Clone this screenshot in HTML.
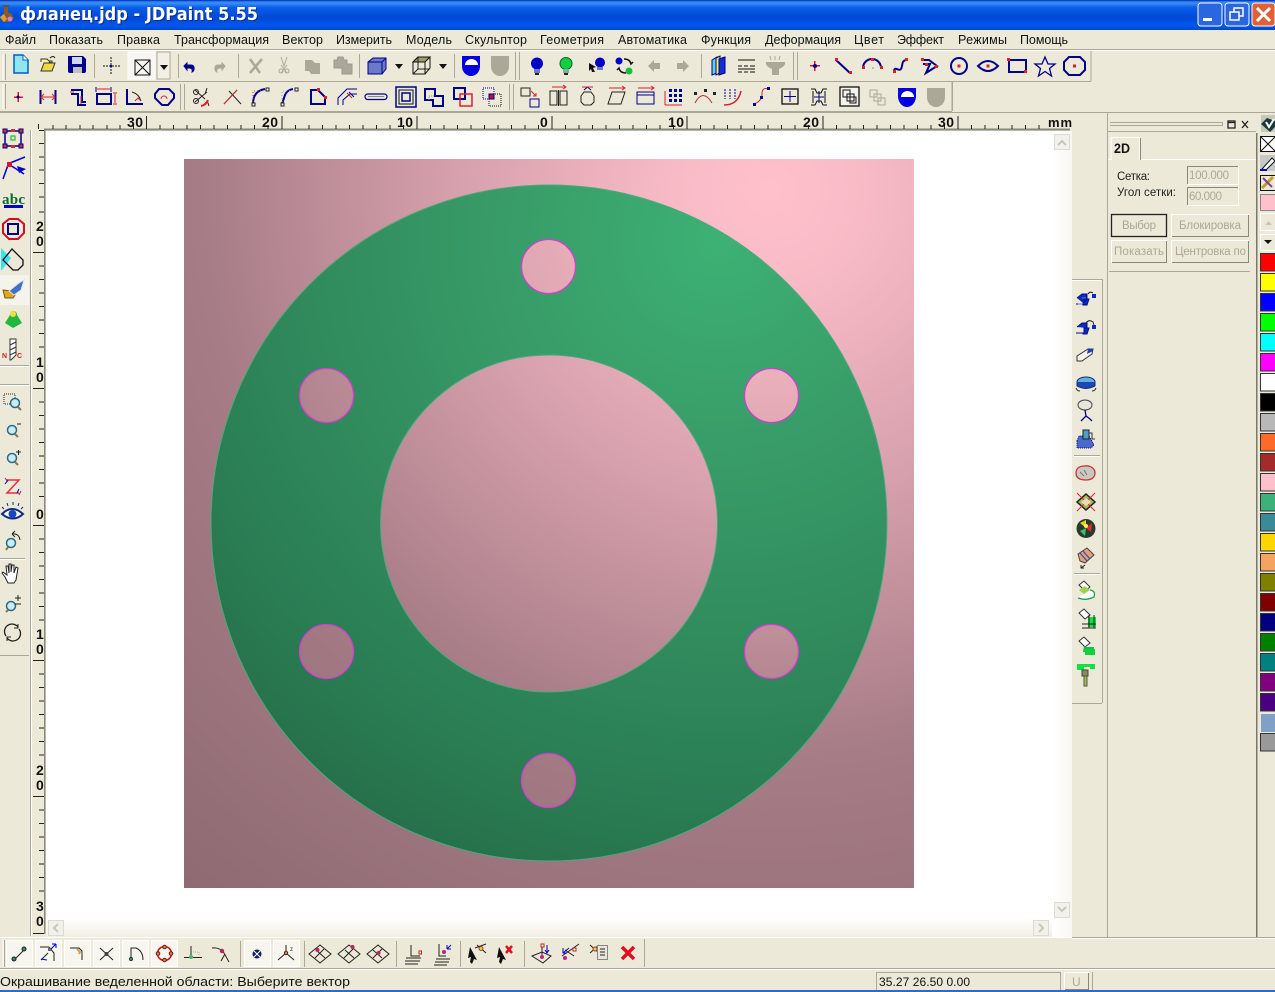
<!DOCTYPE html>
<html><head><meta charset="utf-8"><style>
html,body{margin:0;padding:0;background:#ece9d8;overflow:hidden}
svg{display:block;position:absolute;left:0;top:0}
text{font-family:"Liberation Sans","DejaVu Sans",sans-serif}
.m{font-size:12.5px;fill:#111}
.r{font-family:"Liberation Sans",sans-serif;font-weight:bold;font-size:14px;fill:#111}
.d{font-size:11.5px;fill:#aca899}
.l{font-size:11.5px;fill:#222}
.b{fill:none;stroke:#00008c;stroke-width:2}
.t{fill:none;stroke:#00008c;stroke-width:1}
.k{fill:none;stroke:#222;stroke-width:1}
.s{stroke:#aca899;stroke-width:1;fill:none}
.g{fill:#aca899}
.rd{fill:#e01030}
</style></head><body>
<svg width="1275" height="992" viewBox="0 0 1275 992" xmlns="http://www.w3.org/2000/svg">
<defs>
<linearGradient id="tb" x1="0" y1="0" x2="0" y2="1"><stop offset="0" stop-color="#0a5ae0"/><stop offset=".1" stop-color="#3a90f8"/><stop offset=".25" stop-color="#0a5de8"/><stop offset=".6" stop-color="#0048d8"/><stop offset=".85" stop-color="#0058ee"/><stop offset="1" stop-color="#0048c8"/></linearGradient>
<radialGradient id="pk" gradientUnits="userSpaceOnUse" cx="770" cy="190" r="950"><stop offset="0" stop-color="#ffc0cb"/><stop offset=".1" stop-color="#f8bbc6"/><stop offset=".33" stop-color="#d6a0ac"/><stop offset=".6" stop-color="#a67c86"/><stop offset="1" stop-color="#8c6870"/></radialGradient>
<radialGradient id="gn" gradientUnits="userSpaceOnUse" cx="720" cy="240" r="720"><stop offset="0" stop-color="#3db174"/><stop offset=".3" stop-color="#389c68"/><stop offset=".75" stop-color="#2b7f55"/><stop offset="1" stop-color="#246b47"/></radialGradient>
<linearGradient id="fade" x1="0" y1="0" x2="0" y2="1"><stop offset="0" stop-color="#fff"/><stop offset="1" stop-color="#f1efe4"/></linearGradient>
<linearGradient id="fadeh" x1="0" y1="0" x2="1" y2="0"><stop offset="0" stop-color="#fff"/><stop offset="1" stop-color="#f8f7f1"/></linearGradient>
</defs>

<!-- base -->
<rect width="1275" height="992" fill="#ece9d8"/>
<!-- title bar -->
<rect width="1275" height="30" fill="url(#tb)"/>
<rect y="0" width="1275" height="1" fill="#0840c0"/>
<text x="21" y="21" font-size="18" font-weight="bold" fill="#0a2a80" textLength="238" lengthAdjust="spacingAndGlyphs" style="font-family:'DejaVu Sans',sans-serif">фланец.jdp - JDPaint 5.55</text>
<text x="20" y="20" font-size="18" font-weight="bold" fill="#fff" textLength="238" lengthAdjust="spacingAndGlyphs" style="font-family:'DejaVu Sans',sans-serif">фланец.jdp - JDPaint 5.55</text>
<g><path d="M4 7h4v6h3l3 5-4 4H3l-3-4 4-5z" fill="#8a5a20"/><rect x="3" y="5" width="6" height="2" fill="#555"/><circle cx="10" cy="19" r="2.5" fill="#d080d0"/><path d="M0 17l4-3 3 5-3 3z" fill="#d8a030"/></g>
<!-- window buttons -->
<g stroke="#fff" stroke-width="1">
<rect x="1198" y="3" width="24" height="23" rx="3" fill="#2a66e0"/>
<rect x="1225" y="3" width="24" height="23" rx="3" fill="#2a66e0"/>
<rect x="1252" y="3" width="23" height="23" rx="3" fill="#e0603a"/></g>
<rect x="1203" y="18" width="9" height="3" fill="#fff"/>
<g fill="none" stroke="#fff" stroke-width="1.5"><rect x="1234" y="8" width="9" height="8"/><rect x="1230" y="12" width="9" height="8" fill="#2a66e0"/></g>
<path d="M1257 8l13 13M1270 8l-13 13" stroke="#fff" stroke-width="3"/>

<!-- menu -->
<rect y="49" width="1275" height="1" fill="#aca899"/><rect y="50" width="1275" height="1" fill="#fff"/>
<g class="m">
<text x="5" y="44" textLength="31">Файл</text><text x="49" y="44" textLength="54">Показать</text><text x="117" y="44" textLength="43">Правка</text><text x="174" y="44" textLength="95">Трансформация</text><text x="282" y="44" textLength="41">Вектор</text><text x="336" y="44" textLength="56">Измерить</text><text x="406" y="44" textLength="46">Модель</text><text x="465" y="44" textLength="62">Скульптор</text><text x="540" y="44" textLength="64">Геометрия</text><text x="618" y="44" textLength="69">Автоматика</text><text x="701" y="44" textLength="50">Функция</text><text x="765" y="44" textLength="76">Деформация</text><text x="854" y="44" textLength="30">Цвет</text><text x="897" y="44" textLength="47">Эффект</text><text x="958" y="44" textLength="49">Режимы</text><text x="1020" y="44" textLength="48">Помощь</text>
</g>

<!-- toolbar frames -->
<path d="M0 81.500H1091M1091 51V81M0 111.500H952M952 82V111M0 112.500H1275" stroke="#aca899" fill="none"/>
<g class="s"><path d="M94.500 54V78M178.500 54V78M238.500 54V78M359.500 54V78M454.500 54V78M701.500 54V78"/></g>
<g stroke="#fff" fill="none"><path d="M3 54v26M3 84v25"/></g>
<g stroke="#aca899" fill="none"><path d="M5.500 54v26M5.500 84v25M519.500 52v28M515.500 52v28M797.500 52v28M793.500 52v28M184.500 84v26M180.500 84v26M513.500 84v26M509.500 84v26"/></g>
<!-- TB1 -->
<rect x="128" y="52" width="27" height="27" fill="#f7f6f0" stroke="#fff"/><rect x="157" y="52" width="13" height="27" fill="#f2f0e6" stroke="#aca899"/>
<path d="M14 55h9l5 5v13H14z" fill="#8fe6ee" stroke="#0060c0" stroke-width="1.500"/><path d="M23 55v5h5" fill="#fff" stroke="#0060c0"/>
<path d="M41 62v-3h6l2 2h3v2l-3-1" fill="#fff08a" stroke="#333"/><path d="M41 71l3-8h11l-3 8z" fill="#f0d840" stroke="#333"/><path d="M50 58c2-2 4-2 5 0" stroke="#222" fill="none"/>
<path d="M68 56h15l3 3v12q0 2-2 2H70q-2 0-2-2z" fill="#00008c"/><rect x="72" y="57" width="10" height="7" fill="#d0d8f0"/><rect x="73" y="67" width="9" height="6" fill="#c0c0c0"/>
<path d="M103 66h17M111 57v18" stroke="#111" stroke-dasharray="2 1" fill="none"/><rect x="110" y="65" width="2" height="2" fill="#0000c0"/>
<rect x="135" y="60" width="15" height="15" fill="none" stroke="#111" /><path d="M135 60l15 15M150 60l-15 15" stroke="#111"/>
<path d="M160 65h8l-4 5z" fill="#111"/>
<path d="M184 66l3-3v2h4c4 0 4 6 1 7 1-3-1-4-3-4h-2v2z" fill="#00008c" stroke="#00008c"/>
<path d="M225 66l-3-3v2h-4c-4 0-4 6-1 7-1-3 1-4 3-4h2v2z" class="g" stroke="#aca899"/>
<path d="M250 59l10 14M262 59l-12 14" stroke="#aca899" stroke-width="2.500"/>
<g stroke="#aca899" fill="none"><path d="M281 57l3 9 3-9M281 73l6-8M287 73l-6-8"/><circle cx="281" cy="71" r="2"/><circle cx="287" cy="71" r="2"/></g>
<path d="M305 60h7l3 3h5v11h-9l-2-3h-4z" class="g"/>
<path d="M334 60h3l1-3h5l1 3h3v4h5v10h-10v-6h-8z" class="g" stroke="#999"/>
<path d="M368 62l5-4h13v11l-4 5h-14z" fill="#6a7ac8" stroke="#00008c"/><path d="M368 62h14v12M382 62l4-4" stroke="#00008c" fill="none"/>
<path d="M395 64h8l-4 5z" fill="#111"/>
<path d="M413 62l5-5h12v11l-5 6h-12z" fill="none" stroke="#111"/><path d="M418 57h12l-5 5h-12z" fill="#a0a060" stroke="#111"/><path d="M425 62v12M413 62" stroke="#111"/><path d="M418 57v12h12M418 69l-5 5" stroke="#222" fill="none"/>
<path d="M439 64h8l-4 5z" fill="#111"/>
<g><path d="M462 56h18v10c0 6-4 10-9 10s-9-4-9-10z" fill="#0000e0"/><path d="M465 65a6.500 6 0 0 1 13 0z" fill="#fff"/></g>
<path d="M491 56h18v10c0 6-4 10-9 10s-9-4-9-10z" class="g"/>
<circle cx="537" cy="63.500" r="6" fill="#0000c8"/><rect x="534" y="69" width="6" height="4" fill="#6a7ac8"/><rect x="535" y="73" width="4" height="2" fill="#222"/>
<circle cx="566" cy="63.500" r="6" fill="#10d040" stroke="#063"/><rect x="563" y="69" width="6" height="4" fill="#88b090"/><rect x="564" y="73" width="4" height="2" fill="#222"/>
<circle cx="600" cy="62.500" r="5" fill="#0000c8"/><rect x="597" y="67" width="6" height="3" fill="#6a7ac8"/><path d="M589 63l7 4-3 1 2 4h-3l-1-3-2 2z" fill="#111"/>
<circle cx="619" cy="61" r="3.500" fill="#0000c8"/><circle cx="629" cy="71" r="3.500" fill="#10c040"/><path d="M624 59q6 0 7 5l2-2M626 73q-6 0-7-5l-2 2" stroke="#111" stroke-width="1.500" fill="none"/>
<path d="M648 66l6-6v3h6v6h-6v3z" class="g"/><path d="M689 66l-6-6v3h-6v6h6v3z" class="g"/>
<path d="M712 60l5-3v16l-5 2z" fill="#60d0e0" stroke="#00008c"/><path d="M716 58l4-2v17l-4 2z" fill="#f0f060" stroke="#00008c"/><path d="M719 59l6-2v16l-6 2z" fill="#1030d0" stroke="#00008c"/>
<g stroke="#111"><path d="M738 60h17M738 66h4M744 66h4M750 66h5M738 69h17M738 72h4M744 72h4M750 72h5" fill="none"/></g>
<path d="M766 62h19q1 4-6 7v6h-7v-6q-7-3-6-7z" class="g"/><path d="M771 60l-1-4M775 60v-4M779 60l1-4" stroke="#aca899" fill="none"/>
<g class="rd"><rect x="814" y="61" width="1.500" height="10"/><rect x="810" y="65" width="10" height="1.500"/></g><circle cx="815" cy="66" r="2" fill="#0000a0"/>
<path d="M836 60l14 13" stroke="#00008c" stroke-width="2"/><rect x="835" y="58" width="3" height="3" fill="#e02020"/><rect x="849" y="71" width="3" height="3" fill="#e02020"/>
<path d="M863 68a9 9 0 0 1 18 0" class="b"/><rect x="862" y="66" width="3" height="3" fill="#e02020"/><rect x="871" y="58" width="3" height="3" fill="#e02020"/><rect x="880" y="66" width="3" height="3" fill="#e02020"/><rect x="872" y="67" width="2" height="2" fill="#bbb"/>
<path d="M894 72c0-7 5 0 7-3s0-8 5-9" class="b"/><rect x="893" y="70" width="3" height="3" fill="#e02020"/><rect x="905" y="58" width="3" height="3" fill="#e02020"/>
<path d="M923 60h6l8 6-11 7 4-9h-7" class="b"/><rect x="921" y="58" width="3" height="3" fill="#e02020"/><rect x="935" y="65" width="3" height="3" fill="#e02020"/><rect x="925" y="63" width="3" height="3" fill="#e02020"/>
<circle cx="959" cy="66" r="8" class="b"/><rect x="957.500" y="64.500" width="3" height="3" fill="#e02020"/>
<path d="M978 66q10-10 20 0q-10 10-20 0z" class="b"/><rect x="986.500" y="64.500" width="3" height="3" fill="#e02020"/>
<rect x="1009" y="60" width="17" height="12" class="b"/><rect x="1007" y="58" width="3" height="3" fill="#e02020"/><rect x="1024" y="70" width="3" height="3" fill="#e02020"/>
<path d="M1045 57l3 7h7l-5.500 4.500 2 7.500-6.500-4.500-6.500 4.500 2-7.500-5.500-4.500h7z" fill="none" stroke="#00008c" stroke-width="1.300"/>
<path d="M1069 57h11l5 5v8l-5 5h-11l-5-5v-8z" class="b"/><rect x="1073" y="64.500" width="3" height="3" fill="#e02020"/>
<!-- TB2 -->
<g class="rd"><rect x="17.500" y="92" width="1.500" height="10"/><rect x="14" y="96.500" width="9" height="1.500"/></g><circle cx="18" cy="97" r="1.500" fill="#0000a0"/>
<path d="M40.500 90v14M55.500 90v14" stroke="#00008c" stroke-width="2"/><path d="M42 97h12M44 94l-3 3 3 3M52 94l3 3-3 3" stroke="#e02030" fill="none"/>
<path d="M71 90h11v12h4M71 94h7v11h8" stroke="#00008c" stroke-width="2" fill="none"/><path d="M74 92h-4M81 96v8" stroke="#e02030" fill="none"/>
<rect x="97" y="94" width="14" height="10" fill="none" stroke="#00008c" stroke-width="2"/><path d="M97 89h13M113 93h4M113 104h4M115 94v9" stroke="#d02030" fill="none"/><path d="M96 87v5M111 87v5" stroke="#00008c"/>
<path d="M127 89v15h16" stroke="#00008c" stroke-width="2" fill="none"/><path d="M132 92q7 2 9 9" stroke="#222" fill="none"/><path d="M135 101l3-3 3 3" stroke="#d02030" fill="none"/>
<path d="M159 89h10l5 5v4l-6 7h-6l-7-7v-4z" fill="none" stroke="#00008c" stroke-width="2"/><path d="M161 99a3 3 0 0 1 6 0" stroke="#e02030" fill="none"/>
<!-- scissors etc -->
<path d="M195 90l10 9M195 102l12-10M207 88l-2 6M207 100l2 6" stroke="#222" fill="none"/><circle cx="196" cy="92" r="2.500" fill="none" stroke="#222"/><circle cx="196" cy="101" r="2.500" fill="none" stroke="#222"/><path d="M201 106q5-1 7-6" stroke="#e02030" stroke-width="2" fill="none"/>
<path d="M224 104l13-14M229 91l12 13" stroke="#222" fill="none"/><path d="M224 104l13-14" stroke="#c03030" fill="none"/>
<path d="M253 104q0-13 12-15" stroke="#00008c" stroke-width="2" fill="none"/><rect x="252" y="103" width="3" height="3" fill="#fff" stroke="#222"/><rect x="266" y="88" width="3" height="3" fill="#fff" stroke="#222"/><path d="M253 102V91h10" stroke="#c03030" stroke-dasharray="1 2" fill="none"/>
<path d="M282 104l3-9q2-5 8-6" stroke="#00008c" stroke-width="2" fill="none"/><rect x="281" y="103" width="3" height="3" fill="#fff" stroke="#222"/><rect x="295" y="88" width="3" height="3" fill="#fff" stroke="#222"/><path d="M282 102V91h8" stroke="#999" stroke-dasharray="1 2" fill="none"/>
<path d="M311 90h7l7 7v7h-14z" class="b"/><rect x="317" y="88" width="3" height="3" fill="#e02020"/><rect x="324" y="96" width="3" height="3" fill="#e02020"/>
<path d="M338 105v-7l9-9h10M343 105v-5l7-6h7M349 92l5 5" stroke="#00008c" fill="none"/><path d="M347 93l5 5" stroke="#d02030" fill="none"/>
<rect x="365" y="94" width="22" height="5.500" rx="2.700" fill="none" stroke="#00008c" stroke-width="1.200"/><path d="M368 96.500h16" stroke="#888"/>
<rect x="396" y="87" width="20" height="20" fill="none" stroke="#00008c" stroke-width="1.500"/><rect x="399" y="90" width="14" height="14" fill="none" stroke="#111"/><rect x="402" y="93" width="8" height="8" fill="none" stroke="#00008c" stroke-width="1.500"/>
<path d="M425 89h10v7h8v10h-10v-6h-8z" class="b"/><path d="M434 96h-5v5" stroke="#888" stroke-dasharray="1 1" fill="none"/>
<rect x="454" y="88" width="11" height="11" class="b"/><rect x="460" y="94" width="12" height="12" fill="none" stroke="#e02030" stroke-width="1.500"/>
<rect x="483" y="88" width="11" height="11" fill="none" stroke="#00008c" stroke-dasharray="1 1"/><rect x="489" y="94" width="12" height="12" fill="none" stroke="#111" stroke-dasharray="1 1"/><rect x="489" y="94" width="5" height="5" fill="#c01040" stroke="#00008c"/>
<!-- transforms -->
<rect x="521" y="88" width="9" height="8" fill="none" stroke="#222"/><rect x="530" y="99" width="9" height="8" fill="none" stroke="#00008c"/><path d="M531 91l5 5M536 93v3h-3" stroke="#e02030" fill="none"/>
<rect x="550" y="91" width="7" height="14" fill="none" stroke="#222"/><rect x="560" y="91" width="7" height="14" fill="none" stroke="#222"/><path d="M558.500 90v16" stroke="#222"/><path d="M552 87h14M563 85l3 2-3 2" stroke="#e02030" fill="none"/>
<path d="M584 92h7l3 4v6l-3 3h-7l-3-3v-6z" fill="none" stroke="#222"/><path d="M584 90l3.500-3 3.500 3" class="t"/><path d="M582 87h11" stroke="#e02030"/>
<path d="M612 92h13l-4 12h-13z" class="k"/><path d="M609 88h16M622 86l3 2-3 2" stroke="#e02030" fill="none"/>
<rect x="637" y="92" width="17" height="12" fill="none" stroke="#00008c"/><path d="M637 95h17" stroke="#00008c"/><path d="M638 88h16M651 86l3 2-3 2" stroke="#e02030" fill="none"/>
<g fill="#00008c" stroke="none"><path d="M669 89h3v3h-3zM674 89h3v3h-3zM679 89h3v3h-3zM669 94h3v3h-3zM674 94h3v3h-3zM679 94h3v3h-3zM669 99h3v3h-3zM674 99h3v3h-3zM679 99h3v3h-3z"/></g><path d="M665 91v14M665 105h17" stroke="#e02030" fill="none"/>
<path d="M695 103q8-15 17 0" stroke="#c03030" fill="none"/><rect x="694" y="92" width="3" height="3" fill="#223"/><rect x="704" y="89" width="3" height="3" fill="#223"/><rect x="713" y="92" width="3" height="3" fill="#223"/>
<path d="M725 89v10M730 89v10M735 89v10" stroke="#00008c" stroke-dasharray="2 1" fill="none"/><path d="M724 105q14 0 17-14" stroke="#d02030" stroke-width="1.500" fill="none"/>
<path d="M754 104q8-3 8-10t6-5" stroke="#c03030" fill="none"/><rect x="753" y="103" width="3" height="3" fill="#0000b0"/><rect x="760" y="96" width="3" height="3" fill="#0000b0"/><rect x="767" y="87" width="3" height="3" fill="#0000b0"/>
<rect x="782" y="89" width="16" height="15" fill="none" stroke="#111" stroke-width="1.300"/><path d="M790 91v11M784 96.500h12" stroke="#00008c" fill="none"/>
<path d="M811 89h4l2 4h4l2-4h4M811 105h4l2-4h4l2 4h4M813 91v12M825 91v12" stroke="#111" fill="none"/><path d="M819 91v12M814 97h10" stroke="#00008c" fill="none"/>
<rect x="840" y="87" width="19" height="19" fill="#f5f4ec" stroke="#111" stroke-width="1.300"/><rect x="843" y="90" width="7" height="7" fill="none" stroke="#111"/><rect x="847" y="94" width="7" height="7" fill="none" stroke="#111"/><rect x="850" y="97" width="6" height="6" fill="none" stroke="#111"/>
<g fill="none" stroke="#aca899"><rect x="870" y="90" width="7" height="7"/><rect x="874" y="94" width="7" height="7"/><rect x="878" y="98" width="7" height="7"/></g>
<g><path d="M898 88h18v8c0 6-4 11-9 11s-9-5-9-11z" fill="#0000e0"/><path d="M901 97a6.500 6 0 0 1 13 0z" fill="#fff"/></g>
<path d="M927 88h18v9c0 6-4 10-9 10s-9-4-9-10z" class="g"/>
<path d="M952.500 82v29" stroke="#aca899"/>

<!-- rulers -->
<path d="M44 129.500H1070" stroke="#8a8878" stroke-width="2"/>
<path d="M38.500 124V129M53 125V129M66 125V129M80 125V129M93 125V129M107 125V129M120 125V129" stroke="#222"/>
<g stroke="#222"><path d="M133.500 125v4M146.500 116v13M160 125v4M173.500 125v4M187 125v4M200.500 125v4M214 125v4M227.500 125v4M241 125v4M254.500 125v4M282 116v13M268 125v4M295.500 125v4M309 125v4M322.500 125v4M336 125v4M349.500 125v4M363 125v4M376.500 125v4M390 125v4M403.500 125v4M417 116v13M430.500 125v4M444 125v4M457.500 125v4M471 125v4M484.500 125v4M498 125v4M511.500 125v4M525 125v4M538.500 125v4M552 116v13M565.500 125v4M579 125v4M592.500 125v4M606 125v4M619.500 125v4M633 125v4M646.500 125v4M660 125v4M673.500 125v4M687 116v13M700.500 125v4M714 125v4M727.500 125v4M741 125v4M754.500 125v4M768 125v4M781.500 125v4M795 125v4M808.500 125v4M823 116v13M836.500 125v4M850 125v4M863.500 125v4M877 125v4M890.500 125v4M904 125v4M917.500 125v4M931 125v4M944.500 125v4M958 116v13M971.500 125v4M985 125v4M998.500 125v4M1012 125v4M1025.500 125v4M1039 125v4"/></g>
<g class="r"><text x="127" y="127" textLength="16">30</text><text x="262" y="127" textLength="16">20</text><text x="397" y="127" textLength="16">10</text><text x="540" y="127">0</text><text x="668" y="127" textLength="16">10</text><text x="803" y="127" textLength="16">20</text><text x="938" y="127" textLength="16">30</text><text x="1048" y="127" font-size="13" textLength="24">mm</text></g>

<rect x="30" y="130" width="1" height="806" fill="#aca899"/><rect x="31" y="130" width="1" height="806" fill="#fff"/>
<rect x="44" y="130" width="1.500" height="804" fill="#8a8878"/>
<g stroke="#222"><path d="M39 130.500h5M39 143.500h5M39 157h5M39 170h5M39 183.500h5M39 197h5M39 212h5M33 252.500h11M39 266h5M39 279.500h5M39 293h5M39 306.500h5M39 320h5M39 333.500h5M39 347h5M33 388.500h11M39 402h5M39 415.500h5M39 429h5M39 442.500h5M39 456h5M39 469.500h5M39 483h5M39 496.500h5M33 525.500h11M39 539h5M39 552.500h5M39 566h5M39 579.500h5M39 593h5M39 606.500h5M39 620h5M33 660.500h11M39 674h5M39 687.500h5M39 701h5M39 714.500h5M39 728h5M39 741.500h5M39 755h5M33 796.500h11M39 810h5M39 823.500h5M39 837h5M39 850.500h5M39 864h5M39 877.500h5M39 891h5M33 933.500h11"/></g>
<g class="r"><text x="36" y="231">2</text><text x="36" y="246">0</text><text x="36" y="367">1</text><text x="36" y="382">0</text><text x="36" y="519">0</text><text x="36" y="639">1</text><text x="36" y="654">0</text><text x="36" y="775">2</text><text x="36" y="790">0</text><text x="36" y="911">3</text><text x="36" y="926">0</text></g>

<!-- canvas -->
<rect x="46" y="131" width="1006" height="787" fill="#fff"/>
<rect x="46" y="918" width="1026" height="19" fill="url(#fade)"/>
<rect x="1052" y="131" width="20" height="806" fill="url(#fadeh)"/>
<rect x="184" y="159" width="730" height="729" fill="url(#pk)"/>
<path fill-rule="evenodd" fill="url(#gn)" stroke="#4fa87c" stroke-width="1" d="M211 523a338 338 0 1 0 676 0a338 338 0 1 0-676 0zM380.500 523.500a168.500 168.500 0 1 0 337 0a168.500 168.500 0 1 0-337 0z"/>
<g fill="url(#pk)" stroke="#d43cd4" stroke-width="1.300">
<circle cx="548.500" cy="266.500" r="27"/><circle cx="771.500" cy="395.500" r="27"/><circle cx="771.500" cy="651.500" r="27"/><circle cx="548.500" cy="780.500" r="27"/><circle cx="326.500" cy="651.500" r="27"/><circle cx="326.500" cy="395.500" r="27"/></g>

<!-- scroll buttons -->
<g fill="#f3f2ea" stroke="#dcdbd0"><rect x="1054.500" y="134.500" width="15" height="15"/><rect x="1054.500" y="902.500" width="15" height="15"/><rect x="48.500" y="920.500" width="15" height="15"/><rect x="1033.500" y="920.500" width="15" height="15"/></g>
<g fill="none" stroke="#c8c7ba" stroke-width="2"><path d="M1058 145l4-4 4 4M1058 907l4 4 4-4M58 924l-4 4 4 4M1039 924l4 4-4 4"/></g>

<!-- left toolbar -->
<g>
<rect x="5" y="131" width="16" height="15" fill="none" stroke="#00008c" stroke-width="1.500"/><g fill="#d03030"><rect x="3" y="129" width="4" height="4" stroke="#00008c"/><rect x="19" y="129" width="4" height="4" stroke="#00008c"/><rect x="3" y="144" width="4" height="4" stroke="#00008c"/><rect x="19" y="144" width="4" height="4" stroke="#00008c"/><rect x="11" y="129" width="4" height="3"/><rect x="11" y="145" width="4" height="3"/></g><rect x="11" y="136" width="4" height="4" fill="none" stroke="#30c040" stroke-width="1.300"/>
<path d="M8 165L3 179M10 163l15-6M10 165l14 9" stroke="#0000d0" stroke-width="1.500"/><rect x="7" y="162" width="5" height="5" fill="#e01030"/><path d="M17 166l9 3-7 4z" fill="#0000d0"/>
<text x="2" y="204" font-size="15" font-weight="bold" fill="#0a6a30" textLength="23" style="font-family:'Liberation Serif',serif">abc</text><rect x="4" y="205" width="19" height="3" fill="#0000c0"/>
<path d="M9 219h9l6 5v9l-6 6H9l-6-6v-9z" fill="none" stroke="#d01020" stroke-width="2"/><rect x="8" y="224" width="10" height="10" fill="none" stroke="#00008c" stroke-width="2"/>
<path d="M1 248l10 10-9 12H1z" fill="#40e0f0"/><path d="M12 249l11 11v5l-5 5h-5l-10-10z" fill="none" stroke="#111" stroke-width="1.300"/>
<rect x="0" y="275" width="29" height="30" fill="#f4f3ec"/><path d="M3 290l9 1 3 4-2 3H5z" fill="#e0a820" stroke="#7a5a10"/><path d="M9 291l10-8 5-3-3 10-7 5z" fill="#4070c8" stroke="#e0e0e0"/>
<path d="M13 311c3 0 4 2 4 4l5 8-9 5-8-5 5-8c0-2 1-4 3-4z" fill="#20b840"/><circle cx="13" cy="314" r="3" fill="#f0e040"/>
<path d="M10 339h6v16l-5 5h-1z" fill="#fff" stroke="#333"/><path d="M10 345l6-3M10 350l6-3M10 355l6-3" stroke="#333"/><text x="2" y="358" font-size="7" font-weight="bold" fill="#d02020">N</text><text x="17" y="358" font-size="7" font-weight="bold" fill="#d02020">C</text>
<path d="M0 365.500H29" stroke="#aca899"/><path d="M0 366.500H29" stroke="#fff"/>
<path d="M0 384.500H29M0 558.500H25" stroke="#aca899"/><path d="M0 385.500H29M0 559.500H25" stroke="#fff"/>
<rect x="4" y="394" width="11" height="10" fill="none" stroke="#222" stroke-dasharray="1 1"/>
<circle cx="15" cy="403" r="4.500" fill="#c8ecf4" stroke="#2a6a8a" stroke-width="1.500"/><path d="M18 407l3 3" stroke="#8a7a40" stroke-width="2"/>
<circle cx="12" cy="430" r="4.500" fill="#c8ecf4" stroke="#2a6a8a" stroke-width="1.500"/><path d="M15 434l3 3" stroke="#8a7a40" stroke-width="2"/><path d="M17 424h4" stroke="#222"/>
<circle cx="12" cy="458" r="4.500" fill="#c8ecf4" stroke="#2a6a8a" stroke-width="1.500"/><path d="M15 462l3 3" stroke="#8a7a40" stroke-width="2"/><path d="M16 452h5M18.500 450v5" stroke="#222"/>
<path d="M6 480h13l-12 13h12" stroke="#e03040" stroke-width="1.500" fill="none"/><path d="M5 484l3-4M19 489l-2 4" stroke="#0000b0" fill="none"/><path d="M5 478l3 4M19 495l2-4" stroke="#8030a0" fill="none"/>
<path d="M2 514q10-10 21 0q-10 9-21 0z" fill="#fff" stroke="#102a80" stroke-width="2"/><circle cx="12.500" cy="514" r="4" fill="#1848c0"/><path d="M4 509l-2-2M8 506l-1-3M13 505v-3M18 506l1-3M21 509l2-2" stroke="#102a80"/>
<circle cx="11" cy="543" r="4.500" fill="#c8ecf4" stroke="#2a6a8a" stroke-width="1.500"/><path d="M8 547l-2 3" stroke="#8a7a40" stroke-width="2"/><path d="M12 534q7-1 8 6M12 534l3-3M12 534l3 3" stroke="#222" fill="none"/>
<path d="M5 577l-3-4 1-1 4 3-1-9 2 0 1 7V564h2v8l1-7 2 0v8l2-6 2 1-2 12-2 3H8z" fill="#fff" stroke="#222"/>
<circle cx="11" cy="606" r="4.500" fill="#c8ecf4" stroke="#2a6a8a" stroke-width="1.500"/><path d="M8 610l-2 2" stroke="#8a7a40" stroke-width="2"/><path d="M15 598h6M18 595v6M15 604h6" stroke="#222"/>
<path d="M6 636a7 7 0 0 1 12-9M19 629a7 7 0 0 1-12 9" fill="none" stroke="#222" stroke-width="1.300"/><path d="M18 624v4h-4M7 641v-4h4" fill="none" stroke="#222"/>
<path d="M0 655.500H29" stroke="#aca899"/>
</g>

<!-- right toolbar -->
<rect x="1072" y="276" width="31" height="428" fill="#ece9d8"/>
<path d="M1072 279.500H1102M1102.500 279V703M1072 703.500H1102" stroke="#aca899"/>
<path d="M1072 280.500H1101M1074 456.500H1100M1074 574.500H1100" stroke="#fff"/><path d="M1074 455.500H1100M1074 573.500H1100" stroke="#aca899"/>
<path d="M1107.500 113V937" stroke="#aca899"/>
<g>
<path d="M1076 304h8v-5h5l-2 6h-4v-1zM1077 298l5-4h5v5l-4 4" fill="#0a2ac0" stroke="#00108a"/><path d="M1078 304h4M1082 298h4" stroke="#6080e0"/><path d="M1088 294q2-3 5-1" stroke="#222" fill="none"/><rect x="1092" y="294" width="4" height="4" fill="#0a2ac0"/>
<path d="M1076 333h8v-5h5l-2 6h-4v-1zM1077 327l5-4h5v5" fill="#0a2ac0" stroke="#00108a"/><path d="M1086 323q3-4 7-1l1 3" stroke="#222" fill="none"/><rect x="1092" y="325" width="4" height="4" fill="#0a2ac0"/>
<path d="M1077 356l11-7h5l-1 5-10 7h-5z" fill="#f2f2ea" stroke="#333"/><path d="M1088 349l-1 5 6-3v-2z" fill="#1a40c0"/>
<ellipse cx="1086" cy="382" rx="9" ry="5" fill="#60b0e0" stroke="#102a80"/><path d="M1077 382v4q9 5 18 0v-4" fill="#1848b0" stroke="#102a80"/><path d="M1076 388q1 3 4 3M1096 388q-1 3-4 3" stroke="#222" fill="none"/>
<ellipse cx="1085" cy="405" rx="7" ry="5" fill="#e8e6d8" stroke="#445"/><path d="M1085 410l1 6-5 5M1086 416l4 3 2 2" stroke="#00008c" stroke-width="1.300" fill="none"/>
<path d="M1077 441l2-5h10l5 9-3 3h-14z" fill="#4a6ac8" stroke="#00008c" stroke-dasharray="1 1"/><rect x="1083" y="430" width="6" height="9" fill="#4fa0c0" stroke="#223"/><path d="M1089 433h3v6h3" stroke="#333" fill="none"/>
<path d="M1076 473c0-5 4-7 8-7 7-1 11 3 11 7s-3 7-9 7-10-2-10-7z" fill="#c8c8c0" stroke="#d03030" stroke-width="1.300"/><path d="M1084 470l3 5M1080 472l4 4" stroke="#777"/>
<path d="M1086 494l9 8-9 8-9-8z" fill="#b8b060" stroke="#102a20" stroke-width="1.500"/><path d="M1077 493l18 18M1095 493l-18 18" stroke="#e02030" fill="none"/><path d="M1086 498l5 4-5 4-5-4z" fill="#e0e0b0"/>
<circle cx="1086" cy="528.500" r="9.500" fill="#283a30"/><path d="M1086 528l-6-5 6-3z" fill="#f0d020"/><path d="M1086 528l6-5-1 9z" fill="#e03020"/><path d="M1086 528l-6 3 5 5z" fill="#40c060"/><circle cx="1086" cy="526" r="2" fill="#f8f060"/>
<path d="M1078 554l9-6 7 7-9 8-5-2z" fill="#e8a070" stroke="#444"/><path d="M1080 553l7 8M1083 551l7 8" stroke="#3050c0" stroke-width="1.300"/><path d="M1085 565l-4 3M1081 565v3h3" stroke="#222" fill="none"/>
<path d="M1079 585l5-4 6 6-5 4z" fill="#fff" stroke="#333"/><path d="M1079 590l6-4 5 4-6 4z" fill="#a0d050"/><path d="M1078 598q8 3 16-1 2-6-4-7" fill="#fff" stroke="#20a050" stroke-width="1.300"/>
<path d="M1079 613l5-4 6 6-5 4z" fill="#fff" stroke="#333"/><rect x="1088" y="617" width="8" height="10" fill="#10e040"/><path d="M1082 624h14M1089 615v13M1094 615v13M1082 628h14" stroke="#222" fill="none"/>
<path d="M1079 641l5-4 6 6-5 4z" fill="#fff" stroke="#333"/><path d="M1086 647h8v5h-11l1-6z" fill="#10c040"/><rect x="1085" y="649" width="10" height="6" fill="#10d040"/>
<path d="M1077 664h18v5h-5v-2h-6v3h-7z" fill="#10e040"/><rect x="1082" y="670" width="6" height="6" fill="#8a8a60" stroke="#444"/><rect x="1084" y="676" width="3" height="10" fill="#a0c040" stroke="#555"/>
</g>

<!-- side panel -->
<path d="M1110 122.500H1222M1110 125.500H1222" stroke="#aca899"/><path d="M1222.500 122V126" stroke="#aca899"/>
<rect x="1228" y="121" width="7" height="7" fill="#ece9d8" stroke="#222" stroke-width="1.300"/><path d="M1228 122.500h7" stroke="#222" stroke-width="1.300"/>
<path d="M1242 121l6 7M1248 121l-6 7" stroke="#222" stroke-width="1.300"/>
<path d="M1108 131.500H1256" stroke="#aca899"/>
<path d="M1108.500 159.500H1111V137.500H1139.500V159.500H1256" fill="none" stroke="#fff"/><path d="M1140.500 138V160" stroke="#8a8878"/>
<rect x="1112" y="138" width="27" height="22" fill="#ece9d8"/>
<text x="1114" y="153" font-size="14" font-weight="bold" fill="#111" textLength="16" lengthAdjust="spacingAndGlyphs">2D</text>
<rect x="1256" y="133" width="1.500" height="804" fill="#7a7868"/>
<text class="l" x="1117" y="180" textLength="33">Сетка:</text>
<text class="l" x="1117" y="196" textLength="59">Угол сетки:</text>
<path d="M1187.500 184V166.500H1238M1187.500 205V187.500H1238" stroke="#8a8878" fill="none"/><path d="M1188 184.500H1238.500V166M1188 205.500H1238.500V187" stroke="#fff" fill="none"/>
<text class="d" x="1189" y="179" textLength="40">100.000</text><text class="d" x="1189" y="200" textLength="33">60.000</text>
<rect x="1111.500" y="214.500" width="55" height="22" fill="#ece9d8" stroke="#222" stroke-width="1.300"/>
<g fill="#ece9d8" stroke="#fff"><rect x="1171.500" y="214.500" width="77" height="22"/><rect x="1111.500" y="240.500" width="55" height="22"/><rect x="1171.500" y="240.500" width="77" height="22"/></g>
<path d="M1172 236.500H1248.500V215M1112 262.500H1166.500V241M1172 262.500H1248.500V241" fill="none" stroke="#8a8878"/>
<text class="d" x="1122" y="229" textLength="34">Выбор</text><text class="d" x="1179" y="229" textLength="62">Блокировка</text><text class="d" x="1114" y="255" textLength="50">Показать</text><text class="d" x="1175" y="255" textLength="71">Центровка по</text>
<path d="M1109 271.500H1250" stroke="#aca899"/>

<!-- palette -->
<rect x="1261" y="115" width="14" height="17" fill="#c8c8b8"/><path d="M1261 124l6-6 8 3v6l-5 5z" fill="#1a3a3a"/><path d="M1266 122l3 5 5-8" stroke="#fff" stroke-width="2" fill="none"/>
<rect x="1260.500" y="136.500" width="15" height="15" fill="#fff" stroke="#111"/><path d="M1261 137l14 14M1275 137l-14 14" stroke="#111"/>
<rect x="1260" y="155" width="15" height="16" fill="#c8c8c8"/><path d="M1262 169l10-11 3 3-9 9z" fill="#fff" stroke="#111"/><path d="M1260 170h7" stroke="#0000d0" stroke-width="2"/>
<rect x="1260.500" y="175.500" width="15" height="15" fill="#ece9d8" stroke="#111"/><path d="M1262 188l11-11" stroke="#c8a020" stroke-width="3"/><path d="M1263 178l9 9" stroke="#7a40a0" stroke-width="2"/>
<rect x="1260.500" y="194.500" width="15" height="16" fill="#ffc0cb" stroke="#888"/>
<rect x="1260.500" y="213.500" width="15" height="17" fill="#ece9d8" stroke="#fff"/><path d="M1265 225h7l-3.500-4z" fill="#c8c7ba"/>
<rect x="1260.500" y="234.500" width="15" height="16" fill="#ece9d8" stroke="#fff"/><path d="M1264 240h8l-4 4z" fill="#111"/>
<g stroke="#333" stroke-width="1">
<rect x="1260.500" y="253.500" width="16" height="17.500" fill="#ff0000"/><rect x="1260.500" y="273.500" width="16" height="17.500" fill="#ffff00"/><rect x="1260.500" y="293.500" width="16" height="17.500" fill="#0000ff"/><rect x="1260.500" y="313.500" width="16" height="17.500" fill="#00ff00"/><rect x="1260.500" y="333.500" width="16" height="17.500" fill="#00ffff"/><rect x="1260.500" y="353.500" width="16" height="17.500" fill="#ff00ff"/><rect x="1260.500" y="373.500" width="16" height="17.500" fill="#ffffff"/><rect x="1260.500" y="393.500" width="16" height="17.500" fill="#000000"/><rect x="1260.500" y="413.500" width="16" height="17.500" fill="#b8b8b8"/><rect x="1260.500" y="433.500" width="16" height="17.500" fill="#ff6a28"/><rect x="1260.500" y="453.500" width="16" height="17.500" fill="#a52a2a"/><rect x="1260.500" y="473.500" width="16" height="17.500" fill="#ffc0cb"/><rect x="1260.500" y="493.500" width="16" height="17.500" fill="#3cb27a"/><rect x="1260.500" y="513.500" width="16" height="17.500" fill="#3a8a98"/><rect x="1260.500" y="533.500" width="16" height="17.500" fill="#ffd700"/><rect x="1260.500" y="553.500" width="16" height="17.500" fill="#f4a460"/><rect x="1260.500" y="573.500" width="16" height="17.500" fill="#808000"/><rect x="1260.500" y="593.500" width="16" height="17.500" fill="#800000"/><rect x="1260.500" y="613.500" width="16" height="17.500" fill="#000080"/><rect x="1260.500" y="633.500" width="16" height="17.500" fill="#008000"/><rect x="1260.500" y="653.500" width="16" height="17.500" fill="#008080"/><rect x="1260.500" y="673.500" width="16" height="17.500" fill="#800080"/><rect x="1260.500" y="693.500" width="16" height="17.500" fill="#4b0082"/></g>
<rect x="1261" y="714" width="14" height="18" fill="#80a0c8"/>
<rect x="1260.500" y="733.500" width="16" height="17.500" fill="#999" stroke="#333"/>

<!-- bottom toolbar -->
<path d="M1072 937.500H1275" stroke="#aca899"/><path d="M0 937.500H1072M1072 938.500H1275" stroke="#fff"/>
<path d="M4.500 940v27" stroke="#aca899"/><path d="M3 940v27" stroke="#fff"/>
<g fill="#f6f5ee" stroke="#fff"><rect x="6.500" y="940.500" width="26" height="26"/><rect x="35.500" y="940.500" width="26" height="26"/><rect x="64.500" y="940.500" width="26" height="26"/><rect x="93.500" y="940.500" width="26" height="26"/><rect x="122.500" y="940.500" width="26" height="26"/><rect x="151.500" y="940.500" width="26" height="26"/><rect x="244.500" y="940.500" width="26" height="26"/><rect x="273.500" y="940.500" width="26" height="26"/></g>
<path d="M240.500 941v26M304.500 941v26M396.500 941v26M460.500 941v26M524.500 941v26M644.500 939v28" stroke="#aca899"/>
<path d="M0 968.500H1275" stroke="#aca899"/><path d="M0 969.500H1275" stroke="#fff"/>
<path d="M14 960l11-11" stroke="#222"/><circle cx="14" cy="959" r="2" fill="#3a8a70" stroke="#222"/><circle cx="24" cy="949" r="2" fill="#3a8a70" stroke="#222"/>
<path d="M40 947h9l5 6v8M41 960l7-7" stroke="#222" fill="none"/><path d="M47 960l-6-1M56 944l-5 5M56 944v4M56 944h-4" stroke="#0000d0" fill="none"/><rect x="48" y="948" width="3" height="3" fill="#666"/>
<path d="M70 948h9l3 3v9" stroke="#222" fill="none"/><path d="M77 949l3 3 -1 2" stroke="#e0a040" stroke-width="2" fill="none"/>
<path d="M100 948l13 12M113 948l-13 12" stroke="#222"/><rect x="104.500" y="952" width="4" height="4" fill="#444"/>
<path d="M131 960v-12h5q7 3 7 12" stroke="#222" fill="none"/><circle cx="131" cy="959" r="1.500" fill="#30c0a0" stroke="#222"/>
<circle cx="164.500" cy="953.500" r="7" fill="none" stroke="#d01010" stroke-width="1.500"/><circle cx="164.500" cy="947" r="1.800" fill="#e08030" stroke="#522"/><circle cx="164.500" cy="960" r="1.800" fill="#e08030" stroke="#522"/><circle cx="158" cy="953.500" r="1.800" fill="#e08030" stroke="#522"/><circle cx="171" cy="953.500" r="1.800" fill="#e08030" stroke="#522"/>
<path d="M184 957.500h18M191 946v12" stroke="#222"/><circle cx="191" cy="957" r="2" fill="#30c070"/><path d="M193 952h6v4" stroke="#aaa" stroke-dasharray="1 1" fill="none"/>
<path d="M212 948q8-1 12 5l5 9M225 954l-4 7" stroke="#222" fill="none"/><circle cx="222" cy="951" r="2.200" fill="#c02060"/>
<circle cx="257" cy="954" r="4.500" fill="#10206a"/><path d="M254 951l6 6M260 951l-6 6" stroke="#fff"/>
<path d="M286 945v8l-8 7M286 953l8 7" stroke="#222" fill="none"/><circle cx="286" cy="953" r="1.700" fill="#e08030" stroke="#522"/><text x="290" y="951" font-size="6" fill="#222">z</text>
<g fill="none" stroke="#222"><path d="M320 945l11 9-11 9-11-9z"/><path d="M316 950l9 8M324 949l-9 9"/><path d="M349 945l11 9-11 9-11-9z"/><path d="M345 950l9 8M353 949l-9 9"/><path d="M378 945l11 9-11 9-11-9z"/><path d="M373 950l9 8M382 949l-9 9"/></g>
<circle cx="317.500" cy="950" r="2" fill="#c02060"/><circle cx="352.500" cy="947" r="2" fill="#c02060"/><circle cx="378.500" cy="953" r="2" fill="#c02060"/>
<path d="M411 945v11h9M406 958h15M405 961h15M405 964h13" stroke="#222" fill="none"/><rect x="419" y="951" width="2.500" height="3" fill="#fff" stroke="#c02020"/>
<path d="M439 944v12h7M436 959h14M435 962h14M434 965h13" stroke="#222" fill="none"/><circle cx="444" cy="952" r="2" fill="#c02080"/><path d="M447 949l4-4M447 949h4M447 949v-4" stroke="#0000d0" fill="none"/>
<path d="M470 947l7 13-3-1-2 5-2-2 1-5-3 1z" fill="#111"/><path d="M475 948l11-4M477 945l9 8" stroke="#222"/><circle cx="481" cy="948.500" r="2" fill="#f0d020" stroke="#844"/>
<path d="M499 947l7 13-3-1-2 5-2-2 1-5-3 1z" fill="#111"/><path d="M506 946l6 7M512 946l-6 7" stroke="#e01020" stroke-width="2.500"/>
<path d="M532 956l10-4 9 4-8 7z" fill="none" stroke="#222"/><path d="M542 945v13" stroke="#222"/><rect x="541" y="944" width="3" height="3" fill="#fff" stroke="#c02020"/><path d="M547 945v7M545 950l2 3 2-3" stroke="#0000d0" fill="none"/><circle cx="542" cy="957" r="2" fill="#c02090"/>
<path d="M562 956l17-12M565 950l9 6" stroke="#222" fill="none"/><path d="M563 953l6-5M563 948v5h4" stroke="#0000d0" fill="none"/><rect x="573" y="948" width="3" height="3" fill="#fff" stroke="#c02020"/><circle cx="565" cy="958" r="2" fill="#c02090"/>
<path d="M590 945l9 8M599 945l-9 8" stroke="#222"/><circle cx="595" cy="949" r="2" fill="#f0d020" stroke="#844"/><rect x="597.500" y="945.500" width="10" height="14" fill="#e8e6da" stroke="#888"/><path d="M600 949h5M600 952h5M600 955h5" stroke="#222"/>
<path d="M622 947l12 12M634 947l-12 12" stroke="#e01020" stroke-width="3.500"/>

<!-- status bar -->
<text x="0" y="986" font-size="12.500" fill="#111" textLength="350" lengthAdjust="spacingAndGlyphs">Окрашивание веделенной области: Выберите вектор</text>
<path d="M876.500 990V972.500H1060.500V990" fill="none" stroke="#aca899"/>
<text x="879" y="986" font-size="12" fill="#111" textLength="91">35.27 26.50 0.00</text>
<rect x="1064.500" y="972.500" width="24" height="17" fill="#ece9d8" stroke="#fff"/><path d="M1065 989.500H1088.500V973" stroke="#8a8878" fill="none"/>
<text x="1072" y="986" font-size="12" fill="#aca899">U</text>
<path d="M1092.500 972v18" stroke="#aca899"/>
<rect y="990" width="1275" height="2" fill="#2a6ad8"/>
</svg>
</body></html>
